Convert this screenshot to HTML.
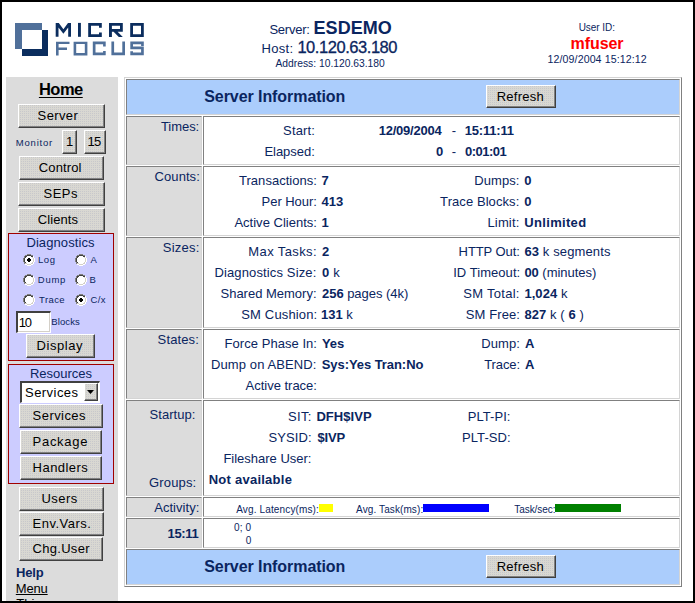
<!DOCTYPE html><html><head><meta charset="utf-8"><style>
html,body{margin:0;padding:0}
body{width:695px;height:603px;position:relative;overflow:hidden;background:#000;font-family:"Liberation Sans",sans-serif}
.t{position:absolute;white-space:nowrap;line-height:20px}
.btn{position:absolute;box-sizing:border-box;background:conic-gradient(#c8c8cb 0 25%,#d9d8d2 0) 0 0/2px 2px #d6d5cf;border-top:1px solid #fff;border-left:1px solid #fff;border-right:1px solid #404040;border-bottom:1px solid #404040;box-shadow:inset -1px -1px 0 #808080}
</style></head><body>
<div style="position:absolute;left:2px;top:2px;width:691px;height:599px;box-sizing:border-box;background:#fff"></div>
<svg style="position:absolute;left:0;top:0" width="150" height="60" viewBox="0 0 150 60">
<path d="M15 23H42V30H22V49H15Z" fill="#50709a"/>
<path d="M42 30H48V56H22V49H42Z" fill="#0b2d5e"/>
<g fill="#0b2d5e" fill-rule="evenodd">
<path d="M55.7 22.9H58.8L63.4 29.3L68 22.9H71V36.8H68.2V27.5L63.4 33.8L58.5 27.5V36.8H55.7Z"/>
<path d="M78 22.9H80.9V36.8H78Z"/>
<path d="M88.2 23H101.8V27.8H99V25.8H91V34.2H99V32.4H101.8V37H88.2Z"/>
<path d="M109 23H122.8V31.8H117.6L122.8 37H118.8L113.6 31.8H111.9V37H109ZM111.9 25.8V28.9H120V25.8Z"/>
<path d="M130.2 23H143.8V37H130.2ZM133 25.8V34.2H141V25.8Z"/>
</g>
<g fill="#50709a" fill-rule="evenodd">
<path d="M56 41.7H69.5V44H58.6V47.5H67V50.1H58.6V55.6H56Z"/>
<path d="M73.6 41.7H87.4V55.6H73.6ZM76.2 44V53H84.8V44Z"/>
<path d="M92.8 41.6H105.7V46.5H103.1V44.3H95.5V52.6H103.1V50.9H105.7V55.3H92.8Z"/>
<path d="M111.4 41.6H114.1V52.6H122.3V41.6H125V55.3H111.4Z"/>
<path d="M130.3 41.6H143.8V46H141.1V44.3H133V46.5H143.8V55.3H130.3V51.3H133V52.6H141.1V49.3H130.3Z"/>
</g>
</svg>
<div class="t" style="left:269.40px;top:20px;font-size:13px;font-weight:normal;color:#0a2560;letter-spacing:-0.234px;">Server:</div>
<div class="t" style="left:313.60px;top:18px;font-size:18px;font-weight:bold;color:#0a2560;letter-spacing:0.020px;">ESDEMO</div>
<div class="t" style="left:261.60px;top:39px;font-size:13px;font-weight:normal;color:#0a2560;letter-spacing:0.300px;">Host:</div>
<div class="t" style="left:297.40px;top:37px;font-size:16.5px;font-weight:normal;color:#0a2560;letter-spacing:-0.450px;-webkit-text-stroke:0.3px #0a2560">10.120.63.180</div>
<div class="t" style="left:275.50px;top:54px;font-size:10.3px;font-weight:normal;color:#0a2560;letter-spacing:-0.005px;">Address: 10.120.63.180</div>
<div class="t" style="left:578.70px;top:18px;font-size:10px;font-weight:normal;color:#0a2560;letter-spacing:-0.042px;">User ID:</div>
<div class="t" style="left:570.60px;top:34px;font-size:16px;font-weight:bold;color:#ff0000;letter-spacing:-0.080px;">mfuser</div>
<div class="t" style="left:547.60px;top:49px;font-size:10.6px;font-weight:normal;color:#0a2560;letter-spacing:0.100px;">12/09/2004 15:12:12</div>
<div style="position:absolute;left:6px;top:77px;width:112px;height:524px;box-sizing:border-box;background:#dcdcdc"></div>
<div class="t" style="left:38.90px;top:79px;font-size:16.5px;font-weight:bold;color:#000;letter-spacing:-0.500px;text-decoration:underline;text-underline-offset:2px">Home</div>
<div class="btn" style="left:18px;top:104px;width:87px;height:24px"></div>
<div class="t" style="left:37.60px;top:106px;font-size:13px;font-weight:normal;color:#000;letter-spacing:0.380px;">Server</div>
<div class="t" style="left:15.80px;top:133px;font-size:9.5px;font-weight:normal;color:#0a2560;letter-spacing:0.783px;">Monitor</div>
<div class="btn" style="left:62px;top:130px;width:15px;height:24px"></div>
<div class="t" style="left:65.90px;top:132px;font-size:13px;font-weight:normal;color:#000;">1</div>
<div class="btn" style="left:84px;top:130px;width:22px;height:24px"></div>
<div class="t" style="left:87.60px;top:132px;font-size:13px;font-weight:normal;color:#000;letter-spacing:-0.900px;">15</div>
<div class="btn" style="left:19px;top:156px;width:85px;height:24px"></div>
<div class="t" style="left:38.80px;top:158px;font-size:13px;font-weight:normal;color:#000;letter-spacing:0.133px;">Control</div>
<div class="btn" style="left:18px;top:182px;width:87px;height:24px"></div>
<div class="t" style="left:43.50px;top:184px;font-size:13px;font-weight:normal;color:#000;letter-spacing:0.466px;">SEPs</div>
<div class="btn" style="left:18px;top:208px;width:87px;height:24px"></div>
<div class="t" style="left:37.80px;top:210px;font-size:13px;font-weight:normal;color:#000;letter-spacing:0.083px;">Clients</div>
<div style="position:absolute;left:8px;top:233px;width:106px;height:128px;box-sizing:border-box;background:#ccccff;border:1px solid #a00000"></div>
<div class="t" style="left:26.40px;top:233px;font-size:13px;font-weight:normal;color:#0a2560;letter-spacing:0.100px;">Diagnostics</div>
<svg style="position:absolute;left:23px;top:254px" width="12" height="12" shape-rendering="crispEdges"><path fill="#808080" d="M4 0h1v1h-1zM5 0h1v1h-1zM6 0h1v1h-1zM7 0h1v1h-1zM2 1h1v1h-1zM3 1h1v1h-1zM8 1h1v1h-1zM9 1h1v1h-1zM1 2h1v1h-1zM1 3h1v1h-1zM0 4h1v1h-1zM0 5h1v1h-1zM0 6h1v1h-1zM0 7h1v1h-1zM1 8h1v1h-1zM1 9h1v1h-1z"/><path fill="#404040" d="M4 1h1v1h-1zM5 1h1v1h-1zM6 1h1v1h-1zM7 1h1v1h-1zM2 2h1v1h-1zM3 2h1v1h-1zM8 2h1v1h-1zM9 2h1v1h-1zM2 3h1v1h-1zM1 4h1v1h-1zM1 5h1v1h-1zM1 6h1v1h-1zM1 7h1v1h-1zM2 8h1v1h-1z"/><path fill="#ffffff" d="M4 2h1v1h-1zM5 2h1v1h-1zM6 2h1v1h-1zM7 2h1v1h-1zM10 2h1v1h-1zM3 3h1v1h-1zM4 3h1v1h-1zM5 3h1v1h-1zM6 3h1v1h-1zM7 3h1v1h-1zM8 3h1v1h-1zM10 3h1v1h-1zM2 4h1v1h-1zM3 4h1v1h-1zM4 4h1v1h-1zM7 4h1v1h-1zM8 4h1v1h-1zM9 4h1v1h-1zM11 4h1v1h-1zM2 5h1v1h-1zM3 5h1v1h-1zM8 5h1v1h-1zM9 5h1v1h-1zM11 5h1v1h-1zM2 6h1v1h-1zM3 6h1v1h-1zM8 6h1v1h-1zM9 6h1v1h-1zM11 6h1v1h-1zM2 7h1v1h-1zM3 7h1v1h-1zM4 7h1v1h-1zM7 7h1v1h-1zM8 7h1v1h-1zM9 7h1v1h-1zM11 7h1v1h-1zM3 8h1v1h-1zM4 8h1v1h-1zM5 8h1v1h-1zM6 8h1v1h-1zM7 8h1v1h-1zM8 8h1v1h-1zM10 8h1v1h-1zM4 9h1v1h-1zM5 9h1v1h-1zM6 9h1v1h-1zM7 9h1v1h-1zM10 9h1v1h-1zM2 10h1v1h-1zM3 10h1v1h-1zM8 10h1v1h-1zM9 10h1v1h-1zM4 11h1v1h-1zM5 11h1v1h-1zM6 11h1v1h-1zM7 11h1v1h-1z"/><path fill="#d4d0c8" d="M9 3h1v1h-1zM10 4h1v1h-1zM10 5h1v1h-1zM10 6h1v1h-1zM10 7h1v1h-1zM9 8h1v1h-1zM2 9h1v1h-1zM3 9h1v1h-1zM8 9h1v1h-1zM9 9h1v1h-1zM4 10h1v1h-1zM5 10h1v1h-1zM6 10h1v1h-1zM7 10h1v1h-1z"/><path fill="#000000" d="M5 4h1v1h-1zM6 4h1v1h-1zM4 5h1v1h-1zM5 5h1v1h-1zM6 5h1v1h-1zM7 5h1v1h-1zM4 6h1v1h-1zM5 6h1v1h-1zM6 6h1v1h-1zM7 6h1v1h-1zM5 7h1v1h-1zM6 7h1v1h-1z"/></svg>
<div class="t" style="left:37.90px;top:250px;font-size:9.5px;font-weight:normal;color:#0a2560;letter-spacing:0.650px;">Log</div>
<svg style="position:absolute;left:75px;top:254px" width="12" height="12" shape-rendering="crispEdges"><path fill="#808080" d="M4 0h1v1h-1zM5 0h1v1h-1zM6 0h1v1h-1zM7 0h1v1h-1zM2 1h1v1h-1zM3 1h1v1h-1zM8 1h1v1h-1zM9 1h1v1h-1zM1 2h1v1h-1zM1 3h1v1h-1zM0 4h1v1h-1zM0 5h1v1h-1zM0 6h1v1h-1zM0 7h1v1h-1zM1 8h1v1h-1zM1 9h1v1h-1z"/><path fill="#404040" d="M4 1h1v1h-1zM5 1h1v1h-1zM6 1h1v1h-1zM7 1h1v1h-1zM2 2h1v1h-1zM3 2h1v1h-1zM8 2h1v1h-1zM9 2h1v1h-1zM2 3h1v1h-1zM1 4h1v1h-1zM1 5h1v1h-1zM1 6h1v1h-1zM1 7h1v1h-1zM2 8h1v1h-1z"/><path fill="#ffffff" d="M4 2h1v1h-1zM5 2h1v1h-1zM6 2h1v1h-1zM7 2h1v1h-1zM10 2h1v1h-1zM3 3h1v1h-1zM4 3h1v1h-1zM5 3h1v1h-1zM6 3h1v1h-1zM7 3h1v1h-1zM8 3h1v1h-1zM10 3h1v1h-1zM2 4h1v1h-1zM3 4h1v1h-1zM4 4h1v1h-1zM5 4h1v1h-1zM6 4h1v1h-1zM7 4h1v1h-1zM8 4h1v1h-1zM9 4h1v1h-1zM11 4h1v1h-1zM2 5h1v1h-1zM3 5h1v1h-1zM4 5h1v1h-1zM5 5h1v1h-1zM6 5h1v1h-1zM7 5h1v1h-1zM8 5h1v1h-1zM9 5h1v1h-1zM11 5h1v1h-1zM2 6h1v1h-1zM3 6h1v1h-1zM4 6h1v1h-1zM5 6h1v1h-1zM6 6h1v1h-1zM7 6h1v1h-1zM8 6h1v1h-1zM9 6h1v1h-1zM11 6h1v1h-1zM2 7h1v1h-1zM3 7h1v1h-1zM4 7h1v1h-1zM5 7h1v1h-1zM6 7h1v1h-1zM7 7h1v1h-1zM8 7h1v1h-1zM9 7h1v1h-1zM11 7h1v1h-1zM3 8h1v1h-1zM4 8h1v1h-1zM5 8h1v1h-1zM6 8h1v1h-1zM7 8h1v1h-1zM8 8h1v1h-1zM10 8h1v1h-1zM4 9h1v1h-1zM5 9h1v1h-1zM6 9h1v1h-1zM7 9h1v1h-1zM10 9h1v1h-1zM2 10h1v1h-1zM3 10h1v1h-1zM8 10h1v1h-1zM9 10h1v1h-1zM4 11h1v1h-1zM5 11h1v1h-1zM6 11h1v1h-1zM7 11h1v1h-1z"/><path fill="#d4d0c8" d="M9 3h1v1h-1zM10 4h1v1h-1zM10 5h1v1h-1zM10 6h1v1h-1zM10 7h1v1h-1zM9 8h1v1h-1zM2 9h1v1h-1zM3 9h1v1h-1zM8 9h1v1h-1zM9 9h1v1h-1zM4 10h1v1h-1zM5 10h1v1h-1zM6 10h1v1h-1zM7 10h1v1h-1z"/></svg>
<div class="t" style="left:90.40px;top:250px;font-size:9.5px;font-weight:normal;color:#0a2560;">A</div>
<svg style="position:absolute;left:23px;top:274px" width="12" height="12" shape-rendering="crispEdges"><path fill="#808080" d="M4 0h1v1h-1zM5 0h1v1h-1zM6 0h1v1h-1zM7 0h1v1h-1zM2 1h1v1h-1zM3 1h1v1h-1zM8 1h1v1h-1zM9 1h1v1h-1zM1 2h1v1h-1zM1 3h1v1h-1zM0 4h1v1h-1zM0 5h1v1h-1zM0 6h1v1h-1zM0 7h1v1h-1zM1 8h1v1h-1zM1 9h1v1h-1z"/><path fill="#404040" d="M4 1h1v1h-1zM5 1h1v1h-1zM6 1h1v1h-1zM7 1h1v1h-1zM2 2h1v1h-1zM3 2h1v1h-1zM8 2h1v1h-1zM9 2h1v1h-1zM2 3h1v1h-1zM1 4h1v1h-1zM1 5h1v1h-1zM1 6h1v1h-1zM1 7h1v1h-1zM2 8h1v1h-1z"/><path fill="#ffffff" d="M4 2h1v1h-1zM5 2h1v1h-1zM6 2h1v1h-1zM7 2h1v1h-1zM10 2h1v1h-1zM3 3h1v1h-1zM4 3h1v1h-1zM5 3h1v1h-1zM6 3h1v1h-1zM7 3h1v1h-1zM8 3h1v1h-1zM10 3h1v1h-1zM2 4h1v1h-1zM3 4h1v1h-1zM4 4h1v1h-1zM5 4h1v1h-1zM6 4h1v1h-1zM7 4h1v1h-1zM8 4h1v1h-1zM9 4h1v1h-1zM11 4h1v1h-1zM2 5h1v1h-1zM3 5h1v1h-1zM4 5h1v1h-1zM5 5h1v1h-1zM6 5h1v1h-1zM7 5h1v1h-1zM8 5h1v1h-1zM9 5h1v1h-1zM11 5h1v1h-1zM2 6h1v1h-1zM3 6h1v1h-1zM4 6h1v1h-1zM5 6h1v1h-1zM6 6h1v1h-1zM7 6h1v1h-1zM8 6h1v1h-1zM9 6h1v1h-1zM11 6h1v1h-1zM2 7h1v1h-1zM3 7h1v1h-1zM4 7h1v1h-1zM5 7h1v1h-1zM6 7h1v1h-1zM7 7h1v1h-1zM8 7h1v1h-1zM9 7h1v1h-1zM11 7h1v1h-1zM3 8h1v1h-1zM4 8h1v1h-1zM5 8h1v1h-1zM6 8h1v1h-1zM7 8h1v1h-1zM8 8h1v1h-1zM10 8h1v1h-1zM4 9h1v1h-1zM5 9h1v1h-1zM6 9h1v1h-1zM7 9h1v1h-1zM10 9h1v1h-1zM2 10h1v1h-1zM3 10h1v1h-1zM8 10h1v1h-1zM9 10h1v1h-1zM4 11h1v1h-1zM5 11h1v1h-1zM6 11h1v1h-1zM7 11h1v1h-1z"/><path fill="#d4d0c8" d="M9 3h1v1h-1zM10 4h1v1h-1zM10 5h1v1h-1zM10 6h1v1h-1zM10 7h1v1h-1zM9 8h1v1h-1zM2 9h1v1h-1zM3 9h1v1h-1zM8 9h1v1h-1zM9 9h1v1h-1zM4 10h1v1h-1zM5 10h1v1h-1zM6 10h1v1h-1zM7 10h1v1h-1z"/></svg>
<div class="t" style="left:37.80px;top:270px;font-size:9.5px;font-weight:normal;color:#0a2560;letter-spacing:0.733px;">Dump</div>
<svg style="position:absolute;left:75px;top:274px" width="12" height="12" shape-rendering="crispEdges"><path fill="#808080" d="M4 0h1v1h-1zM5 0h1v1h-1zM6 0h1v1h-1zM7 0h1v1h-1zM2 1h1v1h-1zM3 1h1v1h-1zM8 1h1v1h-1zM9 1h1v1h-1zM1 2h1v1h-1zM1 3h1v1h-1zM0 4h1v1h-1zM0 5h1v1h-1zM0 6h1v1h-1zM0 7h1v1h-1zM1 8h1v1h-1zM1 9h1v1h-1z"/><path fill="#404040" d="M4 1h1v1h-1zM5 1h1v1h-1zM6 1h1v1h-1zM7 1h1v1h-1zM2 2h1v1h-1zM3 2h1v1h-1zM8 2h1v1h-1zM9 2h1v1h-1zM2 3h1v1h-1zM1 4h1v1h-1zM1 5h1v1h-1zM1 6h1v1h-1zM1 7h1v1h-1zM2 8h1v1h-1z"/><path fill="#ffffff" d="M4 2h1v1h-1zM5 2h1v1h-1zM6 2h1v1h-1zM7 2h1v1h-1zM10 2h1v1h-1zM3 3h1v1h-1zM4 3h1v1h-1zM5 3h1v1h-1zM6 3h1v1h-1zM7 3h1v1h-1zM8 3h1v1h-1zM10 3h1v1h-1zM2 4h1v1h-1zM3 4h1v1h-1zM4 4h1v1h-1zM5 4h1v1h-1zM6 4h1v1h-1zM7 4h1v1h-1zM8 4h1v1h-1zM9 4h1v1h-1zM11 4h1v1h-1zM2 5h1v1h-1zM3 5h1v1h-1zM4 5h1v1h-1zM5 5h1v1h-1zM6 5h1v1h-1zM7 5h1v1h-1zM8 5h1v1h-1zM9 5h1v1h-1zM11 5h1v1h-1zM2 6h1v1h-1zM3 6h1v1h-1zM4 6h1v1h-1zM5 6h1v1h-1zM6 6h1v1h-1zM7 6h1v1h-1zM8 6h1v1h-1zM9 6h1v1h-1zM11 6h1v1h-1zM2 7h1v1h-1zM3 7h1v1h-1zM4 7h1v1h-1zM5 7h1v1h-1zM6 7h1v1h-1zM7 7h1v1h-1zM8 7h1v1h-1zM9 7h1v1h-1zM11 7h1v1h-1zM3 8h1v1h-1zM4 8h1v1h-1zM5 8h1v1h-1zM6 8h1v1h-1zM7 8h1v1h-1zM8 8h1v1h-1zM10 8h1v1h-1zM4 9h1v1h-1zM5 9h1v1h-1zM6 9h1v1h-1zM7 9h1v1h-1zM10 9h1v1h-1zM2 10h1v1h-1zM3 10h1v1h-1zM8 10h1v1h-1zM9 10h1v1h-1zM4 11h1v1h-1zM5 11h1v1h-1zM6 11h1v1h-1zM7 11h1v1h-1z"/><path fill="#d4d0c8" d="M9 3h1v1h-1zM10 4h1v1h-1zM10 5h1v1h-1zM10 6h1v1h-1zM10 7h1v1h-1zM9 8h1v1h-1zM2 9h1v1h-1zM3 9h1v1h-1zM8 9h1v1h-1zM9 9h1v1h-1zM4 10h1v1h-1zM5 10h1v1h-1zM6 10h1v1h-1zM7 10h1v1h-1z"/></svg>
<div class="t" style="left:89.40px;top:270px;font-size:9.5px;font-weight:normal;color:#0a2560;">B</div>
<svg style="position:absolute;left:23px;top:294px" width="12" height="12" shape-rendering="crispEdges"><path fill="#808080" d="M4 0h1v1h-1zM5 0h1v1h-1zM6 0h1v1h-1zM7 0h1v1h-1zM2 1h1v1h-1zM3 1h1v1h-1zM8 1h1v1h-1zM9 1h1v1h-1zM1 2h1v1h-1zM1 3h1v1h-1zM0 4h1v1h-1zM0 5h1v1h-1zM0 6h1v1h-1zM0 7h1v1h-1zM1 8h1v1h-1zM1 9h1v1h-1z"/><path fill="#404040" d="M4 1h1v1h-1zM5 1h1v1h-1zM6 1h1v1h-1zM7 1h1v1h-1zM2 2h1v1h-1zM3 2h1v1h-1zM8 2h1v1h-1zM9 2h1v1h-1zM2 3h1v1h-1zM1 4h1v1h-1zM1 5h1v1h-1zM1 6h1v1h-1zM1 7h1v1h-1zM2 8h1v1h-1z"/><path fill="#ffffff" d="M4 2h1v1h-1zM5 2h1v1h-1zM6 2h1v1h-1zM7 2h1v1h-1zM10 2h1v1h-1zM3 3h1v1h-1zM4 3h1v1h-1zM5 3h1v1h-1zM6 3h1v1h-1zM7 3h1v1h-1zM8 3h1v1h-1zM10 3h1v1h-1zM2 4h1v1h-1zM3 4h1v1h-1zM4 4h1v1h-1zM5 4h1v1h-1zM6 4h1v1h-1zM7 4h1v1h-1zM8 4h1v1h-1zM9 4h1v1h-1zM11 4h1v1h-1zM2 5h1v1h-1zM3 5h1v1h-1zM4 5h1v1h-1zM5 5h1v1h-1zM6 5h1v1h-1zM7 5h1v1h-1zM8 5h1v1h-1zM9 5h1v1h-1zM11 5h1v1h-1zM2 6h1v1h-1zM3 6h1v1h-1zM4 6h1v1h-1zM5 6h1v1h-1zM6 6h1v1h-1zM7 6h1v1h-1zM8 6h1v1h-1zM9 6h1v1h-1zM11 6h1v1h-1zM2 7h1v1h-1zM3 7h1v1h-1zM4 7h1v1h-1zM5 7h1v1h-1zM6 7h1v1h-1zM7 7h1v1h-1zM8 7h1v1h-1zM9 7h1v1h-1zM11 7h1v1h-1zM3 8h1v1h-1zM4 8h1v1h-1zM5 8h1v1h-1zM6 8h1v1h-1zM7 8h1v1h-1zM8 8h1v1h-1zM10 8h1v1h-1zM4 9h1v1h-1zM5 9h1v1h-1zM6 9h1v1h-1zM7 9h1v1h-1zM10 9h1v1h-1zM2 10h1v1h-1zM3 10h1v1h-1zM8 10h1v1h-1zM9 10h1v1h-1zM4 11h1v1h-1zM5 11h1v1h-1zM6 11h1v1h-1zM7 11h1v1h-1z"/><path fill="#d4d0c8" d="M9 3h1v1h-1zM10 4h1v1h-1zM10 5h1v1h-1zM10 6h1v1h-1zM10 7h1v1h-1zM9 8h1v1h-1zM2 9h1v1h-1zM3 9h1v1h-1zM8 9h1v1h-1zM9 9h1v1h-1zM4 10h1v1h-1zM5 10h1v1h-1zM6 10h1v1h-1zM7 10h1v1h-1z"/></svg>
<div class="t" style="left:39.10px;top:290px;font-size:9.5px;font-weight:normal;color:#0a2560;letter-spacing:0.400px;">Trace</div>
<svg style="position:absolute;left:75px;top:294px" width="12" height="12" shape-rendering="crispEdges"><path fill="#808080" d="M4 0h1v1h-1zM5 0h1v1h-1zM6 0h1v1h-1zM7 0h1v1h-1zM2 1h1v1h-1zM3 1h1v1h-1zM8 1h1v1h-1zM9 1h1v1h-1zM1 2h1v1h-1zM1 3h1v1h-1zM0 4h1v1h-1zM0 5h1v1h-1zM0 6h1v1h-1zM0 7h1v1h-1zM1 8h1v1h-1zM1 9h1v1h-1z"/><path fill="#404040" d="M4 1h1v1h-1zM5 1h1v1h-1zM6 1h1v1h-1zM7 1h1v1h-1zM2 2h1v1h-1zM3 2h1v1h-1zM8 2h1v1h-1zM9 2h1v1h-1zM2 3h1v1h-1zM1 4h1v1h-1zM1 5h1v1h-1zM1 6h1v1h-1zM1 7h1v1h-1zM2 8h1v1h-1z"/><path fill="#ffffff" d="M4 2h1v1h-1zM5 2h1v1h-1zM6 2h1v1h-1zM7 2h1v1h-1zM10 2h1v1h-1zM3 3h1v1h-1zM4 3h1v1h-1zM5 3h1v1h-1zM6 3h1v1h-1zM7 3h1v1h-1zM8 3h1v1h-1zM10 3h1v1h-1zM2 4h1v1h-1zM3 4h1v1h-1zM4 4h1v1h-1zM7 4h1v1h-1zM8 4h1v1h-1zM9 4h1v1h-1zM11 4h1v1h-1zM2 5h1v1h-1zM3 5h1v1h-1zM8 5h1v1h-1zM9 5h1v1h-1zM11 5h1v1h-1zM2 6h1v1h-1zM3 6h1v1h-1zM8 6h1v1h-1zM9 6h1v1h-1zM11 6h1v1h-1zM2 7h1v1h-1zM3 7h1v1h-1zM4 7h1v1h-1zM7 7h1v1h-1zM8 7h1v1h-1zM9 7h1v1h-1zM11 7h1v1h-1zM3 8h1v1h-1zM4 8h1v1h-1zM5 8h1v1h-1zM6 8h1v1h-1zM7 8h1v1h-1zM8 8h1v1h-1zM10 8h1v1h-1zM4 9h1v1h-1zM5 9h1v1h-1zM6 9h1v1h-1zM7 9h1v1h-1zM10 9h1v1h-1zM2 10h1v1h-1zM3 10h1v1h-1zM8 10h1v1h-1zM9 10h1v1h-1zM4 11h1v1h-1zM5 11h1v1h-1zM6 11h1v1h-1zM7 11h1v1h-1z"/><path fill="#d4d0c8" d="M9 3h1v1h-1zM10 4h1v1h-1zM10 5h1v1h-1zM10 6h1v1h-1zM10 7h1v1h-1zM9 8h1v1h-1zM2 9h1v1h-1zM3 9h1v1h-1zM8 9h1v1h-1zM9 9h1v1h-1zM4 10h1v1h-1zM5 10h1v1h-1zM6 10h1v1h-1zM7 10h1v1h-1z"/><path fill="#000000" d="M5 4h1v1h-1zM6 4h1v1h-1zM4 5h1v1h-1zM5 5h1v1h-1zM6 5h1v1h-1zM7 5h1v1h-1zM4 6h1v1h-1zM5 6h1v1h-1zM6 6h1v1h-1zM7 6h1v1h-1zM5 7h1v1h-1zM6 7h1v1h-1z"/></svg>
<div class="t" style="left:90.40px;top:290px;font-size:9.5px;font-weight:normal;color:#0a2560;letter-spacing:0.400px;">C/x</div>
<div style="position:absolute;left:16px;top:311px;width:35px;height:22px;box-sizing:border-box;background:#fff;border-top:2px solid #404040;border-left:2px solid #404040;border-right:1px solid #fff;border-bottom:1px solid #fff;box-shadow:inset -1px -1px 0 #d4d0c8"></div>
<div class="t" style="left:18.70px;top:313px;font-size:13px;font-weight:normal;color:#000;letter-spacing:-1.100px;">10</div>
<div class="t" style="left:51.20px;top:312px;font-size:9.5px;font-weight:normal;color:#0a2560;letter-spacing:0.140px;">Blocks</div>
<div class="btn" style="left:26px;top:334px;width:69px;height:24px"></div>
<div class="t" style="left:36.50px;top:336px;font-size:13px;font-weight:normal;color:#000;letter-spacing:0.583px;">Display</div>
<div style="position:absolute;left:8px;top:364px;width:106px;height:120px;box-sizing:border-box;background:#ccccff;border:1px solid #a00000"></div>
<div class="t" style="left:29.90px;top:364px;font-size:13px;font-weight:normal;color:#0a2560;letter-spacing:0.011px;">Resources</div>
<div style="position:absolute;left:20px;top:381px;width:80px;height:22px;box-sizing:border-box;background:#fff;border-top:2px solid #404040;border-left:2px solid #404040;border-right:1px solid #fff;border-bottom:1px solid #fff"></div>
<div class="t" style="left:25.00px;top:383px;font-size:13px;font-weight:normal;color:#000;letter-spacing:0.457px;">Services</div>
<div class="btn" style="left:84px;top:383px;width:14px;height:18px"></div>
<svg style="position:absolute;left:87px;top:390px" width="7" height="4"><path d="M0 0H7L3.5 4Z" fill="#000"/></svg>
<div class="btn" style="left:19px;top:404px;width:84px;height:24px"></div>
<div class="t" style="left:32.60px;top:406px;font-size:13px;font-weight:normal;color:#000;letter-spacing:0.443px;">Services</div>
<div class="btn" style="left:20px;top:430px;width:82px;height:24px"></div>
<div class="t" style="left:32.60px;top:432px;font-size:13px;font-weight:normal;color:#000;letter-spacing:0.700px;">Package</div>
<div class="btn" style="left:20px;top:456px;width:82px;height:24px"></div>
<div class="t" style="left:32.60px;top:457.5px;font-size:13px;font-weight:normal;color:#000;letter-spacing:0.457px;">Handlers</div>
<div class="btn" style="left:19px;top:487px;width:85px;height:24px"></div>
<div class="t" style="left:41.40px;top:489px;font-size:13px;font-weight:normal;color:#000;letter-spacing:0.500px;">Users</div>
<div class="btn" style="left:19px;top:512px;width:85px;height:24px"></div>
<div class="t" style="left:32.50px;top:514px;font-size:13px;font-weight:normal;color:#000;letter-spacing:0.500px;">Env.Vars.</div>
<div class="btn" style="left:19px;top:537px;width:84px;height:24px"></div>
<div class="t" style="left:32.50px;top:539px;font-size:13px;font-weight:normal;color:#000;letter-spacing:0.300px;">Chg.User</div>
<div class="t" style="left:15.90px;top:563px;font-size:13px;font-weight:bold;color:#0a2560;letter-spacing:-0.099px;">Help</div>
<div class="t" style="left:15.80px;top:579px;font-size:13px;font-weight:normal;color:#000;letter-spacing:-0.167px;text-decoration:underline">Menu</div>
<div class="t" style="left:16.30px;top:594px;font-size:13px;font-weight:normal;color:#000;text-decoration:underline">This</div>
<div style="position:absolute;left:124px;top:77px;width:558px;height:510px;box-sizing:border-box;background:#fff;border-top:1px solid #d4d4d4;border-left:1px solid #d4d4d4;border-right:1px solid #808080;border-bottom:1px solid #808080"></div>
<div style="position:absolute;left:126px;top:79px;width:554px;height:36px;box-sizing:border-box;background:#abcdfc;border-top:1px solid #808080;border-left:1px solid #808080;border-right:1px solid #d4d4d4;border-bottom:1px solid #d4d4d4"></div>
<div style="position:absolute;left:126px;top:116px;width:76px;height:49px;box-sizing:border-box;background:#dcdcdc;border-top:1px solid #808080;border-left:1px solid #808080;border-right:1px solid #d4d4d4;border-bottom:1px solid #d4d4d4"></div>
<div style="position:absolute;left:203px;top:116px;width:477px;height:49px;box-sizing:border-box;background:#fff;border-top:1px solid #808080;border-left:1px solid #808080;border-right:1px solid #d4d4d4;border-bottom:1px solid #d4d4d4"></div>
<div style="position:absolute;left:126px;top:166px;width:76px;height:70px;box-sizing:border-box;background:#dcdcdc;border-top:1px solid #808080;border-left:1px solid #808080;border-right:1px solid #d4d4d4;border-bottom:1px solid #d4d4d4"></div>
<div style="position:absolute;left:203px;top:166px;width:477px;height:70px;box-sizing:border-box;background:#fff;border-top:1px solid #808080;border-left:1px solid #808080;border-right:1px solid #d4d4d4;border-bottom:1px solid #d4d4d4"></div>
<div style="position:absolute;left:126px;top:237px;width:76px;height:91px;box-sizing:border-box;background:#dcdcdc;border-top:1px solid #808080;border-left:1px solid #808080;border-right:1px solid #d4d4d4;border-bottom:1px solid #d4d4d4"></div>
<div style="position:absolute;left:203px;top:237px;width:477px;height:91px;box-sizing:border-box;background:#fff;border-top:1px solid #808080;border-left:1px solid #808080;border-right:1px solid #d4d4d4;border-bottom:1px solid #d4d4d4"></div>
<div style="position:absolute;left:126px;top:329px;width:76px;height:70px;box-sizing:border-box;background:#dcdcdc;border-top:1px solid #808080;border-left:1px solid #808080;border-right:1px solid #d4d4d4;border-bottom:1px solid #d4d4d4"></div>
<div style="position:absolute;left:203px;top:329px;width:477px;height:70px;box-sizing:border-box;background:#fff;border-top:1px solid #808080;border-left:1px solid #808080;border-right:1px solid #d4d4d4;border-bottom:1px solid #d4d4d4"></div>
<div style="position:absolute;left:126px;top:400px;width:76px;height:96px;box-sizing:border-box;background:#dcdcdc;border-top:1px solid #808080;border-left:1px solid #808080;border-right:1px solid #d4d4d4;border-bottom:1px solid #d4d4d4"></div>
<div style="position:absolute;left:203px;top:400px;width:477px;height:96px;box-sizing:border-box;background:#fff;border-top:1px solid #808080;border-left:1px solid #808080;border-right:1px solid #d4d4d4;border-bottom:1px solid #d4d4d4"></div>
<div style="position:absolute;left:126px;top:497px;width:76px;height:20px;box-sizing:border-box;background:#dcdcdc;border-top:1px solid #808080;border-left:1px solid #808080;border-right:1px solid #d4d4d4;border-bottom:1px solid #d4d4d4"></div>
<div style="position:absolute;left:203px;top:497px;width:477px;height:20px;box-sizing:border-box;background:#fff;border-top:1px solid #808080;border-left:1px solid #808080;border-right:1px solid #d4d4d4;border-bottom:1px solid #d4d4d4"></div>
<div style="position:absolute;left:126px;top:518px;width:76px;height:30px;box-sizing:border-box;background:#dcdcdc;border-top:1px solid #808080;border-left:1px solid #808080;border-right:1px solid #d4d4d4;border-bottom:1px solid #d4d4d4"></div>
<div style="position:absolute;left:203px;top:518px;width:477px;height:30px;box-sizing:border-box;background:#fff;border-top:1px solid #808080;border-left:1px solid #808080;border-right:1px solid #d4d4d4;border-bottom:1px solid #d4d4d4"></div>
<div style="position:absolute;left:126px;top:549px;width:554px;height:36px;box-sizing:border-box;background:#abcdfc;border-top:1px solid #808080;border-left:1px solid #808080;border-right:1px solid #d4d4d4;border-bottom:1px solid #d4d4d4"></div>
<div class="t" style="left:204.20px;top:87px;font-size:16px;font-weight:bold;color:#0a2560;letter-spacing:-0.064px;">Server Information</div>
<div class="btn" style="left:486px;top:85px;width:70px;height:23px"></div>
<div class="t" style="left:496.70px;top:87px;font-size:13px;font-weight:normal;color:#000;letter-spacing:0.266px;">Refresh</div>
<div class="t" style="left:204.20px;top:557px;font-size:16px;font-weight:bold;color:#0a2560;letter-spacing:-0.064px;">Server Information</div>
<div class="btn" style="left:486px;top:555px;width:70px;height:23px"></div>
<div class="t" style="left:496.70px;top:557px;font-size:13px;font-weight:normal;color:#000;letter-spacing:0.266px;">Refresh</div>
<div class="t" style="left:160.90px;top:117px;font-size:13px;font-weight:normal;color:#0a2560;letter-spacing:-0.040px;">Times:</div>
<div class="t" style="left:154.60px;top:167px;font-size:13px;font-weight:normal;color:#0a2560;letter-spacing:0.067px;">Counts:</div>
<div class="t" style="left:162.80px;top:238px;font-size:13px;font-weight:normal;color:#0a2560;letter-spacing:0.240px;">Sizes:</div>
<div class="t" style="left:157.60px;top:330px;font-size:13px;font-weight:normal;color:#0a2560;letter-spacing:0.133px;">States:</div>
<div class="t" style="left:149.50px;top:405px;font-size:13px;font-weight:normal;color:#0a2560;letter-spacing:0.056px;">Startup:</div>
<div class="t" style="left:149.10px;top:473px;font-size:13px;font-weight:normal;color:#0a2560;letter-spacing:0.133px;">Groups:</div>
<div class="t" style="left:154.20px;top:497.5px;font-size:13px;font-weight:normal;color:#0a2560;letter-spacing:0.039px;">Activity:</div>
<div class="t" style="left:167.60px;top:524px;font-size:13px;font-weight:bold;color:#0a2560;letter-spacing:-0.350px;">15:11</div>
<div class="t" style="left:283.10px;top:121px;font-size:13px;font-weight:normal;color:#0a2560;letter-spacing:0.140px;">Start:</div>
<div class="t" style="left:264.40px;top:142px;font-size:13px;font-weight:normal;color:#0a2560;letter-spacing:-0.028px;">Elapsed:</div>
<div class="t" style="left:378.70px;top:121px;font-size:13px;font-weight:bold;color:#0a2560;letter-spacing:-0.222px;">12/09/2004</div>
<div class="t" style="left:435.90px;top:142px;font-size:13px;font-weight:bold;color:#0a2560;">0</div>
<div class="t" style="left:451.70px;top:121px;font-size:13px;font-weight:normal;color:#0a2560;">-</div>
<div class="t" style="left:451.70px;top:142px;font-size:13px;font-weight:normal;color:#0a2560;">-</div>
<div class="t" style="left:464.70px;top:121px;font-size:13px;font-weight:bold;color:#0a2560;letter-spacing:-0.185px;">15:11:11</div>
<div class="t" style="left:465.00px;top:142px;font-size:13px;font-weight:bold;color:#0a2560;letter-spacing:-0.500px;">0:01:01</div>
<div class="t" style="left:239.00px;top:171px;font-size:13px;font-weight:normal;color:#0a2560;letter-spacing:0.033px;">Transactions:</div>
<div class="t" style="left:321.50px;top:171px;font-size:13px;font-weight:bold;color:#0a2560;">7</div>
<div class="t" style="left:261.60px;top:192px;font-size:13px;font-weight:normal;color:#0a2560;letter-spacing:-0.050px;">Per Hour:</div>
<div class="t" style="left:321.50px;top:192px;font-size:13px;font-weight:bold;color:#0a2560;">413</div>
<div class="t" style="left:234.40px;top:213px;font-size:13px;font-weight:normal;color:#0a2560;letter-spacing:0.015px;">Active Clients:</div>
<div class="t" style="left:321.40px;top:213px;font-size:13px;font-weight:bold;color:#0a2560;">1</div>
<div class="t" style="left:474.30px;top:171px;font-size:13px;font-weight:normal;color:#0a2560;letter-spacing:0.060px;">Dumps:</div>
<div class="t" style="left:524.20px;top:171px;font-size:13px;font-weight:bold;color:#0a2560;">0</div>
<div class="t" style="left:440.10px;top:192px;font-size:13px;font-weight:normal;color:#0a2560;letter-spacing:0.075px;">Trace Blocks:</div>
<div class="t" style="left:524.20px;top:192px;font-size:13px;font-weight:bold;color:#0a2560;">0</div>
<div class="t" style="left:487.50px;top:213px;font-size:13px;font-weight:normal;color:#0a2560;letter-spacing:0.140px;">Limit:</div>
<div class="t" style="left:524.30px;top:213px;font-size:13px;font-weight:bold;color:#0a2560;letter-spacing:0.325px;">Unlimited</div>
<div class="t" style="left:248.30px;top:242px;font-size:13px;font-weight:normal;color:#0a2560;letter-spacing:0.389px;">Max Tasks:</div>
<div class="t" style="left:322.00px;top:242px;font-size:13px;font-weight:bold;color:#0a2560;">2</div>
<div class="t" style="left:214.40px;top:263px;font-size:13px;font-weight:normal;color:#0a2560;letter-spacing:0.138px;">Diagnostics Size:</div>
<div class="t" style="left:322.00px;top:263px;font-size:13px;font-weight:normal;color:#0a2560;letter-spacing:0.250px;"><b>0</b> k</div>
<div class="t" style="left:220.50px;top:284px;font-size:13px;font-weight:normal;color:#0a2560;letter-spacing:-0.008px;">Shared Memory:</div>
<div class="t" style="left:322.00px;top:284px;font-size:13px;font-weight:normal;color:#0a2560;letter-spacing:-0.038px;"><b>256</b> pages (4k)</div>
<div class="t" style="left:241.30px;top:305px;font-size:13px;font-weight:normal;color:#0a2560;letter-spacing:0.150px;">SM Cushion:</div>
<div class="t" style="left:321.00px;top:305px;font-size:13px;font-weight:normal;color:#0a2560;"><b>131</b> k</div>
<div class="t" style="left:458.60px;top:242px;font-size:13px;font-weight:normal;color:#0a2560;letter-spacing:-0.086px;">HTTP Out:</div>
<div class="t" style="left:524.40px;top:242px;font-size:13px;font-weight:normal;color:#0a2560;letter-spacing:0.125px;"><b>63</b> k segments</div>
<div class="t" style="left:453.20px;top:263px;font-size:13px;font-weight:normal;color:#0a2560;letter-spacing:0.050px;">ID Timeout:</div>
<div class="t" style="left:524.40px;top:263px;font-size:13px;font-weight:normal;color:#0a2560;letter-spacing:-0.037px;"><b>00</b> (minutes)</div>
<div class="t" style="left:463.30px;top:284px;font-size:13px;font-weight:normal;color:#0a2560;letter-spacing:0.275px;">SM Total:</div>
<div class="t" style="left:524.40px;top:284px;font-size:13px;font-weight:normal;color:#0a2560;letter-spacing:0.067px;"><b>1,024</b> k</div>
<div class="t" style="left:465.80px;top:305px;font-size:13px;font-weight:normal;color:#0a2560;letter-spacing:0.101px;">SM Free:</div>
<div class="t" style="left:524.40px;top:305px;font-size:13px;font-weight:normal;color:#0a2560;letter-spacing:0.080px;"><b>827</b> k ( <b>6</b> )</div>
<div class="t" style="left:224.60px;top:334px;font-size:13px;font-weight:normal;color:#0a2560;letter-spacing:0.042px;">Force Phase In:</div>
<div class="t" style="left:322.00px;top:334px;font-size:13px;font-weight:bold;color:#0a2560;letter-spacing:-0.100px;">Yes</div>
<div class="t" style="left:211.00px;top:355px;font-size:13px;font-weight:normal;color:#0a2560;letter-spacing:0.108px;">Dump on ABEND:</div>
<div class="t" style="left:321.70px;top:355px;font-size:13px;font-weight:bold;color:#0a2560;letter-spacing:-0.063px;">Sys:Yes Tran:No</div>
<div class="t" style="left:245.50px;top:376px;font-size:13px;font-weight:normal;color:#0a2560;letter-spacing:-0.008px;">Active trace:</div>
<div class="t" style="left:481.30px;top:334px;font-size:13px;font-weight:normal;color:#0a2560;letter-spacing:0.050px;">Dump:</div>
<div class="t" style="left:525.00px;top:334px;font-size:13px;font-weight:bold;color:#0a2560;">A</div>
<div class="t" style="left:484.20px;top:355px;font-size:13px;font-weight:normal;color:#0a2560;letter-spacing:-0.100px;">Trace:</div>
<div class="t" style="left:525.00px;top:355px;font-size:13px;font-weight:bold;color:#0a2560;">A</div>
<div class="t" style="left:288.10px;top:407px;font-size:13px;font-weight:normal;color:#0a2560;letter-spacing:0.267px;">SIT:</div>
<div class="t" style="left:316.40px;top:407px;font-size:13px;font-weight:bold;color:#0a2560;letter-spacing:0.067px;">DFH$IVP</div>
<div class="t" style="left:268.60px;top:428px;font-size:13px;font-weight:normal;color:#0a2560;letter-spacing:0.060px;">SYSID:</div>
<div class="t" style="left:317.40px;top:428px;font-size:13px;font-weight:bold;color:#0a2560;letter-spacing:-0.099px;">$IVP</div>
<div class="t" style="left:223.40px;top:449px;font-size:13px;font-weight:normal;color:#0a2560;letter-spacing:-0.008px;">Fileshare User:</div>
<div class="t" style="left:208.70px;top:470px;font-size:13px;font-weight:bold;color:#0a2560;letter-spacing:0.250px;">Not available</div>
<div class="t" style="left:467.70px;top:407px;font-size:13px;font-weight:normal;color:#0a2560;letter-spacing:0.067px;">PLT-PI:</div>
<div class="t" style="left:462.00px;top:428px;font-size:13px;font-weight:normal;color:#0a2560;letter-spacing:0.083px;">PLT-SD:</div>
<div class="t" style="left:236.20px;top:500px;font-size:10px;font-weight:normal;color:#0a2560;letter-spacing:0.143px;">Avg. Latency(ms):</div>
<div style="position:absolute;left:319px;top:504px;width:14px;height:8px;box-sizing:border-box;background:#ffff00"></div>
<div class="t" style="left:356.10px;top:500px;font-size:10px;font-weight:normal;color:#0a2560;letter-spacing:0.101px;">Avg. Task(ms):</div>
<div style="position:absolute;left:423px;top:504px;width:66px;height:8px;box-sizing:border-box;background:#0000ff"></div>
<div class="t" style="left:514.30px;top:500px;font-size:10px;font-weight:normal;color:#0a2560;letter-spacing:-0.062px;">Task/sec:</div>
<div style="position:absolute;left:555px;top:504px;width:66px;height:8px;box-sizing:border-box;background:#008000"></div>
<div class="t" style="left:234.10px;top:518px;font-size:10px;font-weight:normal;color:#0a2560;letter-spacing:0.133px;">0; 0</div>
<div class="t" style="left:245.70px;top:531px;font-size:10px;font-weight:normal;color:#0a2560;">0</div>
</body></html>
